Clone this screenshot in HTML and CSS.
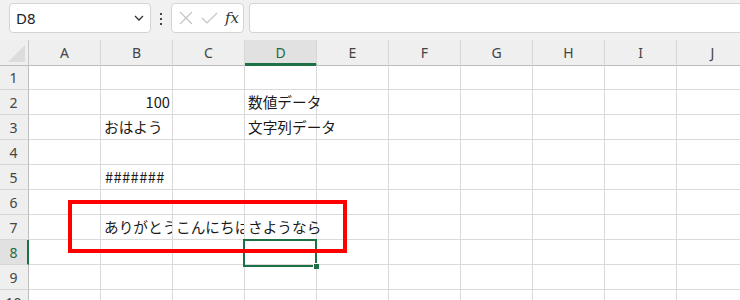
FILE: index.html
```html
<!DOCTYPE html>
<html lang="ja">
<head>
    <meta charset="UTF-8">
    <title>Sheet1</title>
    <link rel="stylesheet" href="styles.css">
</head>
<body>
    <div class="toolbar">
        <div class="namebox">
            <span>D8</span>
            <svg class="chevron" width="10" height="6" viewBox="0 0 10 6"><path d="M1 1 L5 5 L9 1" fill="none" stroke="#333" stroke-width="1.3"/></svg>
        </div>
        <div class="dots">
            <svg width="4" height="12" viewBox="0 0 4 12"><rect x="1" y="0" width="2" height="2" fill="#444"/><rect x="1" y="5" width="2" height="2" fill="#444"/><rect x="1" y="10" width="2" height="2" fill="#444"/></svg>
        </div>
        <div class="fxbox">
            <svg width="14" height="14" viewBox="0 0 14 14"><path d="M1 1 L13 13 M13 1 L1 13" stroke="#c4c4c4" stroke-width="1.2"/></svg>
            <svg width="17" height="12" viewBox="0 0 17 12"><path d="M1 6 L6 11 L16 1" fill="none" stroke="#c4c4c4" stroke-width="1.2"/></svg>
            <span class="fx">fx</span>
        </div>
        <div class="formula"></div>
    </div>

    <div class="sheet">
        <div class="grid">
            <div class="corner"><div class="tri"></div></div>
            <div class="colhead">A</div>
            <div class="colhead">B</div>
            <div class="colhead">C</div>
            <div class="colhead active">D</div>
            <div class="colhead">E</div>
            <div class="colhead">F</div>
            <div class="colhead">G</div>
            <div class="colhead">H</div>
            <div class="colhead">I</div>
            <div class="colhead">J</div>
        </div>
        <div class="grid" id="rows"></div>

        <div class="selection"><div class="handle"></div></div>
        <div class="callout"></div>
    </div>

    <script>
        // セルの内容 (行, 列) - 右隣が埋まっているセルははみ出しを切る
        const data = {
            '2,B': { text: '100', num: true },
            '2,D': { text: '数値データ' },
            '3,B': { text: 'おはよう' },
            '3,D': { text: '文字列データ' },
            '5,B': { text: '#######' },
            '7,B': { text: 'ありがとう', clip: true },
            '7,C': { text: 'こんにちは', clip: true },
            '7,D': { text: 'さようなら' }
        };
        const cols = ['A','B','C','D','E','F','G','H','I','J'];
        const rows = document.getElementById('rows');

        for (let r = 1; r <= 10; r++) {
            const head = document.createElement('div');
            head.className = 'rowhead' + (r === 8 ? ' active' : '');
            head.textContent = r;
            rows.appendChild(head);
            cols.forEach(c => {
                const cell = document.createElement('div');
                cell.className = 'cell';
                const d = data[r + ',' + c];
                if (d) {
                    cell.textContent = d.text;
                    if (d.num) cell.classList.add('num');
                    if (d.clip) cell.classList.add('clip');
                    if (r === 5) cell.classList.add('hash');
                }
                rows.appendChild(cell);
            });
        }
    </script>
</body>
</html>
```

FILE: styles.css
```css
body {
    margin: 0;
    background: #f1f1f1;
    font-family: "Noto Sans", "Liberation Sans", sans-serif;
    overflow: hidden;
}

/* 数式バー */
.toolbar {
    display: flex;
    align-items: center;
    height: 40px;
    padding: 0 0 4px 9px;
    box-sizing: border-box;
}
.namebox {
    width: 142px;
    height: 30px;
    box-sizing: border-box;
    background: white;
    border: 1px solid #d4d4d4;
    border-radius: 4px;
    display: flex;
    align-items: center;
    justify-content: space-between;
    padding: 0 6px;
    font-size: 15px;
    color: #222;
}
.dots {
    width: 20px;
    display: flex;
    justify-content: center;
    padding-top: 1px;
}
.fxbox {
    width: 73px;
    height: 30px;
    box-sizing: border-box;
    background: white;
    border: 1px solid #d4d4d4;
    border-radius: 4px;
    display: flex;
    align-items: center;
    gap: 8px;
    padding-left: 7px;
}
.fx {
    font-family: "DejaVu Serif", "Liberation Serif", serif;
    font-style: italic;
    font-size: 15px;
    color: #333;
    margin-left: -1px;
}
.formula {
    flex: 1;
    height: 30px;
    margin-left: 5px;
    box-sizing: border-box;
    background: white;
    border: 1px solid #d4d4d4;
    border-right: none;
    border-radius: 4px 0 0 4px;
}

/* シート */
.sheet {
    position: relative;
    background: white;
}
.grid {
    display: grid;
    grid-template-columns: 29px repeat(10, 72px);
    grid-auto-rows: 25px;
}
.corner {
    background: #efefef;
    border-right: 1px solid #c8c8c8;
    border-bottom: 1px solid #bdbdbd;
    height: 26px;
    box-sizing: border-box;
    position: relative;
}
.tri {
    position: absolute;
    left: 8px;
    top: 5px;
    width: 0;
    height: 0;
    border-left: 17px solid transparent;
    border-bottom: 17px solid #dcdcdc;
}
.colhead {
    height: 26px;
    box-sizing: border-box;
    background: #efefef;
    border-right: 1px solid #d6d6d6;
    border-bottom: 1px solid #bdbdbd;
    display: flex;
    align-items: center;
    justify-content: center;
    font-size: 14px;
    color: #444;
}
.colhead.active {
    background: #e1e1e1;
    color: #1e6b41;
    border-bottom: 3px solid #1e7145;
    padding-top: 2px;
}
.rowhead {
    background: #efefef;
    border-right: 1px solid #bdbdbd;
    border-bottom: 1px solid #d6d6d6;
    display: flex;
    align-items: center;
    justify-content: center;
    font-size: 14px;
    color: #444;
    padding-right: 1px;
}
.rowhead.active {
    background: #e1e1e1;
    color: #1e6b41;
    border-right: 2px solid #1e7145;
    padding-right: 0;
}
.cell {
    border-right: 1px solid #dadada;
    border-bottom: 1px solid #dadada;
    padding: 0 3px;
    font-family: "Noto Sans CJK JP", "Noto Sans", sans-serif;
    font-size: 14.67px;
    line-height: 24px;
    color: #1a1a1a;
    white-space: nowrap;
    overflow: visible;
}
.cell.clip {
    overflow: hidden;
}
.cell.num {
    text-align: right;
    padding-right: 2px;
}
.cell.hash {
    padding-left: 4px;
    letter-spacing: 0.4px;
}

/* 選択セルと注釈 */
.selection {
    position: absolute;
    left: 243px;
    top: 199px;
    width: 74px;
    height: 28px;
    box-sizing: border-box;
    border: 2px solid #1e7145;
}
.handle {
    position: absolute;
    right: -4px;
    bottom: -4px;
    width: 6px;
    height: 6px;
    background: #1e7145;
    border: 1px solid white;
    border-right: none;
    border-bottom: none;
    box-sizing: border-box;
}
.callout {
    position: absolute;
    left: 68px;
    top: 160px;
    width: 279px;
    height: 53px;
    box-sizing: border-box;
    border: 4px solid #ff0000;
}
```
